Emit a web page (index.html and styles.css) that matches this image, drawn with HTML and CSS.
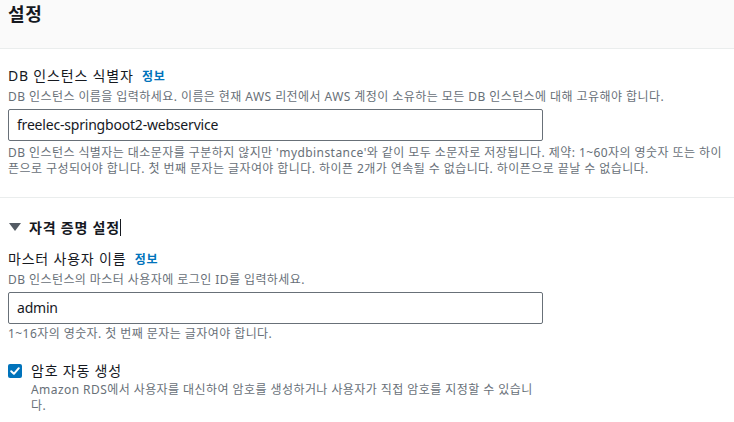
FILE: index.html
```html
<!DOCTYPE html>
<html lang="ko">
<head>
<meta charset="utf-8">
<link rel="stylesheet" href="styles.css">
</head>
<body>
<header class="panel-header">
  <h2 class="panel-title">설정</h2>
</header>
<section class="section">
  <div class="field">
    <div class="label">DB 인스턴스 식별자 <a class="info">정보</a></div>
    <div class="desc">DB 인스턴스 이름을 입력하세요. 이름은 현재 AWS 리전에서 AWS 계정이 소유하는 모든 DB 인스턴스에 대해 고유해야 합니다.</div>
    <div class="input">freelec-springboot2-webservice</div>
    <div class="constraint">DB 인스턴스 식별자는 대소문자를 구분하지 않지만 'mydbinstance'와 같이 모두 소문자로 저장됩니다. 제약: 1~60자의 영숫자 또는 하이픈으로 구성되어야 합니다. 첫 번째 문자는 글자여야 합니다. 하이픈 2개가 연속될 수 없습니다. 하이픈으로 끝날 수 없습니다.</div>
  </div>
</section>
<section class="section section-2">
  <div class="expander"><span class="caret"></span><span class="exp-title">자격 증명 설정</span><span class="cursor"></span></div>
  <div class="field field-2">
    <div class="label">마스터 사용자 이름 <a class="info">정보</a></div>
    <div class="desc">DB 인스턴스의 마스터 사용자에 로그인 ID를 입력하세요.</div>
    <div class="input">admin</div>
    <div class="constraint tight">1~16자의 영숫자. 첫 번째 문자는 글자여야 합니다.</div>
  </div>
  <div class="check-row">
    <span class="checkbox">
      <svg width="14" height="14" viewBox="0 0 14 14"><path d="M3.2 7.2 L5.9 9.8 L10.8 4.2" fill="none" stroke="#fff" stroke-width="2" stroke-linecap="round" stroke-linejoin="round"/></svg>
    </span>
    <div class="check-text">
      <div class="check-label">암호 자동 생성</div>
      <div class="check-desc">Amazon RDS에서 사용자를 대신하여 암호를 생성하거나 사용자가 직접 암호를 지정할 수 있습니다.</div>
    </div>
  </div>
</section>
</body>
</html>
```
FILE: styles.css
```css
* { box-sizing: border-box; }
html, body { margin: 0; padding: 0; background: #fff; }
body {
  font-family: "Noto Sans", "Noto Sans CJK KR", sans-serif;
  color: #16191f;
  width: 734px;
  overflow: hidden;
  letter-spacing: 0.05em;
}
.panel-header {
  height: 49px;
  background: #fafafa;
  border-bottom: 1px solid #eaeded;
  padding: 3px 8px 0;
}
.panel-title {
  margin: 0;
  font-size: 18px;
  line-height: 22px;
  font-weight: 700;
  color: #16191f;
}
.section {
  padding: 17px 8px 20px;
  border-bottom: 1px solid #eaeded;
}
.section-2 { border-bottom: none; padding-top: 19px; }
.label {
  font-size: 14px;
  line-height: 20px;
  color: #16191f;
}
.info {
  color: #0073bb;
  font-weight: 700;
  font-size: 12px;
  margin-left: 4px;
}
.desc {
  margin-top: 2px;
  font-size: 12px;
  line-height: 16px;
  color: #687078;
  letter-spacing: 0.43px;
}
.input {
  margin-top: 4px;
  width: 535px;
  height: 32px;
  border: 1px solid #687078;
  border-radius: 2px;
  padding: 0 8px;
  font-size: 14px;
  line-height: 30px;
  color: #16191f;
  letter-spacing: -0.2px;
}
.constraint {
  margin-top: 4px;
  font-size: 12px;
  line-height: 16px;
  color: #687078;
  padding-right: 4px;
  letter-spacing: 0.43px;
}
.constraint.tight { margin-top: 2px; }
.expander {
  display: flex;
  align-items: center;
  height: 20px;
}
.caret {
  width: 0; height: 0;
  border-left: 6px solid transparent;
  border-right: 6px solid transparent;
  border-top: 8px solid #545b64;
  margin: 0 8px 0 1px;
}
.exp-title {
  font-size: 14px;
  font-weight: 700;
  color: #16191f;
}
.cursor {
  display: inline-block;
  width: 1px;
  height: 17px;
  background: #16191f;
  margin-left: 0;
}
.field-2 { margin-top: 12px; }
.check-row {
  margin-top: 19px;
  display: flex;
  gap: 9px;
  width: 535px;
}
.checkbox {
  flex: 0 0 14px;
  width: 14px;
  height: 14px;
  margin-top: 3px;
  background: #0073bb;
  border-radius: 2px;
  display: flex;
}
.check-text { flex: 1; }
.check-label {
  font-size: 14px;
  line-height: 20px;
  color: #16191f;
}
.check-desc {
  margin-top: 1px;
  font-size: 12px;
  line-height: 16px;
  color: #687078;
  letter-spacing: 0.43px;
}
```
